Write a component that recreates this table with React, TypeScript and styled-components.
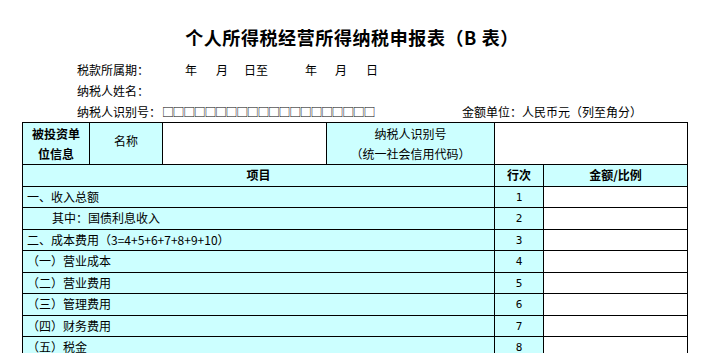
import React from "react";
import styled, { createGlobalStyle } from "styled-components";

const GlobalStyle = createGlobalStyle`
  body {
    margin: 0;
    background: #fff;
    color: #000;
    font-family: "Noto Sans CJK SC", "Liberation Sans", sans-serif;
    font-size: 12px;
  }
`;

const rows: { label: string; indent?: boolean }[] = [
  { label: "一、收入总额" },
  { label: "其中：国债利息收入", indent: true },
  { label: "二、成本费用（3=4+5+6+7+8+9+10）" },
  { label: "（一）营业成本" },
  { label: "（二）营业费用" },
  { label: "（三）管理费用" },
  { label: "（四）财务费用" },
  { label: "（五）税金" },
];

export default function App() {
  return (
    <Page>
      <GlobalStyle />
      <Title>个人所得税经营所得纳税申报表（B 表）</Title>
      <Info>
        <Line>
          <Label>税款所属期：</Label>
          <Gap $w={36}>年</Gap>
          <Gap $w={19}>月</Gap>
          <Gap $w={16}>日至</Gap>
          <Gap $w={37}>年</Gap>
          <Gap $w={18}>月</Gap>
          <Gap $w={19}>日</Gap>
        </Line>
        <Line>
          <Label>纳税人姓名：</Label>
        </Line>
        <Line>
          <Label>纳税人识别号：</Label>
          <Boxes>□□□□□□□□□□□□□□□□□□□□</Boxes>
          <Unit>金额单位：人民币元（列至角分）</Unit>
        </Line>
      </Info>
      <Table>
        <colgroup>
          <col style={{ width: 67 }} />
          <col style={{ width: 73 }} />
          <col style={{ width: 164 }} />
          <col style={{ width: 168 }} />
          <col style={{ width: 49 }} />
          <col style={{ width: 144 }} />
        </colgroup>
        <tbody>
          <TopRow>
            <Cell $fill $bold $center $tall>
              被投资单
              <br />
              位信息
            </Cell>
            <Cell $fill $center $tall>
              <Lift>名称</Lift>
            </Cell>
            <Cell $tall />
            <Cell $fill $center $tall>
              纳税人识别号
              <br />
              （统一社会信用代码）
            </Cell>
            <Cell colSpan={2} $tall />
          </TopRow>
          <Row>
            <Cell colSpan={4} $fill $bold $center>
              项目
            </Cell>
            <Cell $fill $bold $center>
              行次
            </Cell>
            <Cell $fill $bold $center>
              金额/比例
            </Cell>
          </Row>
          {rows.map((r, i) => (
            <Row key={i}>
              <Cell colSpan={4} $fill $indent={r.indent}>
                {r.label}
              </Cell>
              <Cell $fill $center>
                <Num>{i + 1}</Num>
              </Cell>
              <Cell />
            </Row>
          ))}
        </tbody>
      </Table>
    </Page>
  );
}

const Page = styled.div`
  width: 710px;
  padding-top: 24px;
`;

const Title = styled.h1`
  margin: 0;
  text-align: center;
  font-size: 18px;
  font-weight: 700;
  line-height: 26px;
  letter-spacing: 0.6px;
  padding-right: 6px;
`;

const Info = styled.div`
  padding: 9px 0 0 77px;
  display: flex;
  flex-direction: column;
`;

const Line = styled.div`
  display: flex;
  height: 21px;
  align-items: center;
  line-height: 21px;
`;

const Label = styled.span`
  white-space: nowrap;
`;

const Gap = styled.span<{ $w: number }>`
  margin-left: ${(p) => p.$w}px;
`;

const Boxes = styled.span`
  letter-spacing: -1.4px;
  margin-left: 1px;
`;

const Unit = styled.span`
  margin-left: 88px;
`;

const Table = styled.table`
  margin: 0 auto;
  width: 666px;
  table-layout: fixed;
  border-collapse: collapse;
`;

const TopRow = styled.tr`
  height: 42px;
`;

const Row = styled.tr`
  height: 21.5px;
`;

const Cell = styled.td<{
  $fill?: boolean;
  $bold?: boolean;
  $center?: boolean;
  $indent?: boolean;
  $tall?: boolean;
}>`
  border: 1px solid #000;
  padding: 0 0 0 ${(p) => (p.$indent ? 29 : 4)}px;
  background: ${(p) => (p.$fill ? "#ccffff" : "#fff")};
  font-weight: ${(p) => (p.$bold ? 700 : 400)};
  text-align: ${(p) => (p.$center ? "center" : "left")};
  ${(p) => p.$center && "padding: 0;"}
  line-height: ${(p) => (p.$tall ? 20 : 16)}px;
  white-space: nowrap;
  overflow: hidden;
`;

const Lift = styled.span`
  position: relative;
  top: -3px;
`;

const Num = styled.span`
  font-family: "DejaVu Sans Mono", monospace;
  font-size: 11px;
  line-height: 16px;
`;
